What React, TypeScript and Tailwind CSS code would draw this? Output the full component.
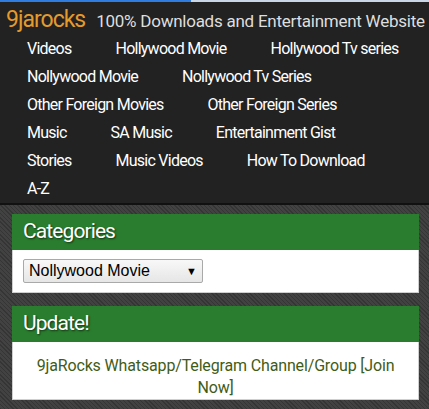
const navRows: string[][] = [
  ["Videos", "Hollywood Movie", "Hollywood Tv series"],
  ["Nollywood Movie", "Nollywood Tv Series"],
  ["Other Foreign Movies", "Other Foreign Series"],
  ["Music", "SA Music", "Entertainment Gist"],
  ["Stories", "Music Videos", "How To Download"],
  ["A-Z"],
];

function Panel({ title, children }: { title: string; children: React.ReactNode }) {
  return (
    <div className="ml-[12px] w-[407px]">
      <div className="h-[36px] bg-[#2a7d2e] flex items-center px-[11px]">
        <h2 className="text-[21px] text-white tracking-[-0.9px] [text-shadow:1px_1px_2px_rgba(0,0,0,0.6)]">
          {title}
        </h2>
      </div>
      <div className="bg-white border border-t-0 border-[#cfcfcf]">{children}</div>
    </div>
  );
}

export default function App() {
  return (
    <div
      className="w-[429px] h-[409px] overflow-hidden bg-[#3b3b3b] bg-[image:repeating-linear-gradient(45deg,#353535_0px,#353535_1px,#424242_1px,#424242_3px)]"
      style={{ fontFamily: "Roboto, 'Noto Sans', sans-serif" }}
    >
      <div className="flex h-[2px]">
        <div className="w-[191px] bg-[#2f7de1]" />
        <div className="flex-1 bg-[#c9d6e8]" />
      </div>

      <header className="bg-[#222222] border-b-[2px] border-[#111]">
        <div className="flex items-baseline h-[33px] pl-[6px] pt-[1px]">
          <span className="text-[23px] text-[#e59a2c] tracking-[-1px]">9jarocks</span>
          <span className="ml-[11px] text-[17px] text-[#dedede] tracking-[-0.25px]">
            100% Downloads and Entertainment Website
          </span>
        </div>
        <nav className="pl-[27px]">
          {navRows.map((row, i) => (
            <div key={i} className="flex gap-[44px] h-[28px] items-center">
              {row.map((item) => (
                <a key={item} className="text-[16px] text-white tracking-[-0.75px] whitespace-nowrap">
                  {item}
                </a>
              ))}
            </div>
          ))}
        </nav>
      </header>

      <div className="pt-[9px] flex flex-col gap-[13px]">
        <Panel title="Categories">
          <div className="px-[10px] py-[9px]">
            <div
              className="w-[180px] h-[24px] flex items-center justify-between pl-[5px] pr-[5px] border border-[#a9a9a9] rounded-[2px] bg-[linear-gradient(#f8f8f8,#e6e6e6)] text-[16px] text-black"
              style={{ fontFamily: "'Liberation Sans', Arial, sans-serif" }}
            >
              <span>Nollywood Movie</span>
              <span className="text-[11px]">▼</span>
            </div>
          </div>
        </Panel>

        <Panel title="Update!">
          <p className="text-center text-[16px] leading-[22px] text-[#3f5c17] px-[10px] pt-[13px] tracking-[-0.15px]">
            9jaRocks Whatsapp/Telegram Channel/Group [Join Now]
          </p>
        </Panel>
      </div>
    </div>
  );
}
